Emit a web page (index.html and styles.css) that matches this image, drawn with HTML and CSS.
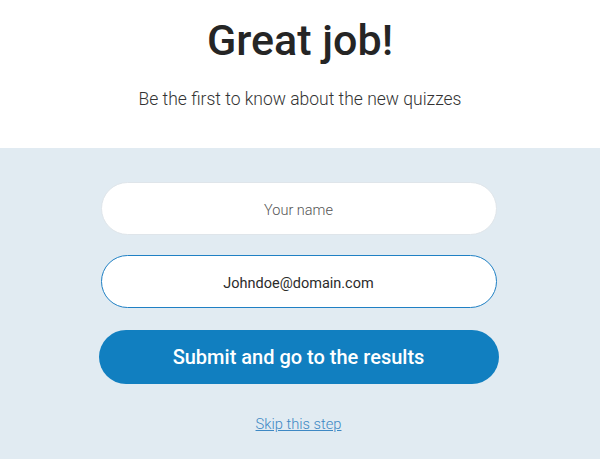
FILE: index.html
```html
<!DOCTYPE html>
<html lang="en">
<head>
<meta charset="utf-8">
<title>Great job!</title>
<link rel="stylesheet" href="styles.css">
</head>
<body>
<header class="hero">
  <h1 class="title">Great job!</h1>
  <p class="subtitle">Be the first to know about the new quizzes</p>
</header>
<main class="panel">
  <form class="form">
    <input class="field" type="text" placeholder="Your name">
    <input class="field field-active" type="email" value="Johndoe@domain.com">
    <button class="submit" type="button">Submit and go to the results</button>
    <a class="skip" href="#">Skip this step</a>
  </form>
</main>
</body>
</html>
```
FILE: styles.css
```css
html, body {
  margin: 0;
  padding: 0;
  height: 100%;
}
body {
  font-family: Roboto, "Liberation Sans", sans-serif;
  background: #e1ebf2;
  display: flex;
  flex-direction: column;
}
.hero {
  background: #ffffff;
  height: 148px;
  box-sizing: border-box;
  padding-top: 14px;
  text-align: center;
}
.title {
  margin: 0;
  font-size: 43px;
  font-weight: 500;
  line-height: 52px;
  color: #252525;
}
.subtitle {
  margin: 22px 0 0;
  font-size: 17.5px;
  font-weight: 300;
  line-height: 22px;
  color: #333333;
}
.panel {
  flex: 1;
  display: flex;
  justify-content: center;
  padding-top: 34px;
  padding-right: 3px;
}
.form {
  width: 396px;
  display: flex;
  flex-direction: column;
  align-items: center;
}
.field {
  width: 396px;
  height: 53px;
  box-sizing: border-box;
  border: 1px solid #dfe5ea;
  border-radius: 27px;
  background: #ffffff;
  padding: 3px 0 0;
  font-family: inherit;
  font-size: 14.5px;
  text-align: center;
  color: #2b2b2b;
  outline: none;
  margin-bottom: 20px;
}
.field::placeholder {
  color: #555555;
  font-weight: 300;
  opacity: 1;
}
.field-active {
  border-color: #1f80c4;
}
.submit {
  width: 400px;
  height: 54px;
  margin-top: 2px;
  border: none;
  border-radius: 27px;
  background: #117fc0;
  color: #ffffff;
  font-family: inherit;
  font-size: 20px;
  font-weight: 500;
  cursor: pointer;
}
.skip {
  margin-top: 31px;
  font-size: 14.7px;
  font-weight: 300;
  color: #3d88c4;
  text-decoration: underline;
}
```
